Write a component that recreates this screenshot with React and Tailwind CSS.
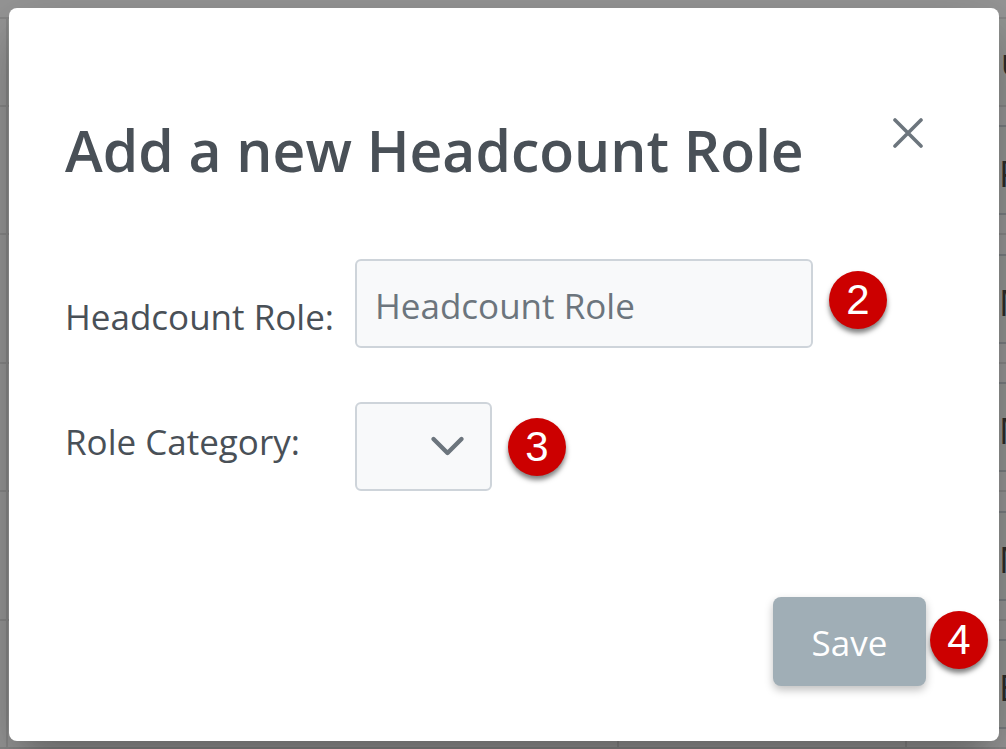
import { useState } from "react";
import clsx from "clsx";

const backgroundRows = ["P", "M", "M", "M", "E"];

function StepBadge({ number }) {
    return (
        <span className="flex size-[58px] shrink-0 items-center justify-center rounded-full bg-[#cc0000] font-['Liberation_Sans',sans-serif] text-[42px] leading-none text-white shadow-[0_4px_5px_rgba(0,0,0,0.5)]">
            {number}
        </span>
    );
}

function BackgroundTable() {
    return (
        <div aria-hidden="true" className="absolute inset-0 flex flex-col overflow-hidden bg-[#959595] pt-[17px] text-4xl text-[#2c2c2c]">
            <div className="flex h-[90px] shrink-0 border-y-2 border-[#868686]">
                <div className="w-2 border-r-2 border-[#868686]" />
                <div className="flex flex-1 items-center justify-end overflow-hidden bg-[#929492]">
                    <span className="w-[5px] font-semibold">u</span>
                </div>
            </div>
            {backgroundRows.map((letter, i) => (
                <div key={i} className={clsx("flex shrink-0 border-b-2 border-[#868686]", i % 2 ? "h-[129px]" : "h-32")}>
                    <div className="w-2 border-r-2 border-[#868686]" />
                    <div className="w-[611px] border-r-2 border-[#868686]" />
                    <div className="w-72 border-r-2 border-[#868686]" />
                    <div className="flex flex-1 items-center">
                        <div className="flex h-[90px] flex-1 items-center justify-end overflow-hidden border-y-2 border-[#797d80] bg-[#929492] pt-2">
                            <span className="w-[7px]">{letter}</span>
                        </div>
                    </div>
                </div>
            ))}
        </div>
    );
}

export default function App() {
    const [role, setRole] = useState("");
    const [category, setCategory] = useState("");

    return (
        <div className="relative flex min-h-screen flex-col py-2 pr-[7px] pl-[9px] font-['Open_Sans',sans-serif] text-[#495057]">
            <BackgroundTable />

            <form
                role="dialog"
                aria-labelledby="dialog-title"
                onSubmit={(e) => e.preventDefault()}
                className="relative flex flex-1 flex-col rounded-lg bg-white pt-[102px] pb-[55px] pl-14 shadow-[0_22px_30px_-14px_rgba(0,0,0,0.2),0_18px_60px_rgba(0,0,0,0.22)]"
            >
                <div className="flex items-start justify-between pr-[72px]">
                    <h1 id="dialog-title" className="pt-1 text-[57px] leading-[72px] font-semibold whitespace-nowrap">
                        Add a new Headcount Role
                    </h1>
                    <button type="button" aria-label="Close" className="pt-2 text-[#6c757d]">
                        <svg width="38" height="30" viewBox="0 0 38 30" fill="none" stroke="currentColor" strokeWidth="3.6" strokeLinecap="round">
                            <path d="M6 2 L32 28 M32 2 L6 28" />
                        </svg>
                    </button>
                </div>

                <div className="flex flex-col gap-[54px] pt-[73px] text-[35px]">
                    <div className="flex items-center">
                        <label htmlFor="role" className="w-[290px] shrink-0 pt-7 whitespace-nowrap">
                            Headcount Role:
                        </label>
                        <div className="flex items-center gap-4">
                            <input
                                id="role"
                                type="text"
                                placeholder="Headcount Role"
                                value={role}
                                onChange={(e) => setRole(e.target.value)}
                                className="h-[89px] w-[458px] rounded-md border-2 border-[#ced4da] bg-[#f8f9fa] px-[18px] pt-1 placeholder:text-[#6c757d]"
                            />
                            <div className="pb-2">
                                <StepBadge number={2} />
                            </div>
                        </div>
                    </div>

                    <div className="flex items-center">
                        <label htmlFor="category" className="w-[290px] shrink-0 pb-2 whitespace-nowrap">
                            Role Category:
                        </label>
                        <div className="flex items-center gap-4">
                            <div className="relative">
                                <select
                                    id="category"
                                    value={category}
                                    onChange={(e) => setCategory(e.target.value)}
                                    className="block h-[89px] w-[137px] appearance-none rounded-md border-2 border-[#ced4da] bg-[#f8f9fa] px-5"
                                >
                                    <option value=""></option>
                                </select>
                                <svg
                                    className="pointer-events-none absolute top-8 right-6 text-[#6c757d]"
                                    width="40"
                                    height="24"
                                    viewBox="0 0 40 24"
                                    fill="none"
                                    stroke="currentColor"
                                    strokeWidth="4.4"
                                    strokeLinecap="round"
                                    strokeLinejoin="round"
                                >
                                    <path d="M5.5 5 L19.5 19 L33.5 5" />
                                </svg>
                            </div>
                            <StepBadge number={3} />
                        </div>
                    </div>
                </div>

                <div className="mt-auto flex items-center justify-end gap-1 pr-[11px]">
                    <button
                        type="submit"
                        className="h-[89px] w-[153px] rounded-lg bg-[#a0aeb6] pt-1 text-[35px] text-white shadow-[0_4px_8px_rgba(0,0,0,0.25)]"
                    >
                        Save
                    </button>
                    <div className="pb-1">
                        <StepBadge number={4} />
                    </div>
                </div>
            </form>
        </div>
    );
}
